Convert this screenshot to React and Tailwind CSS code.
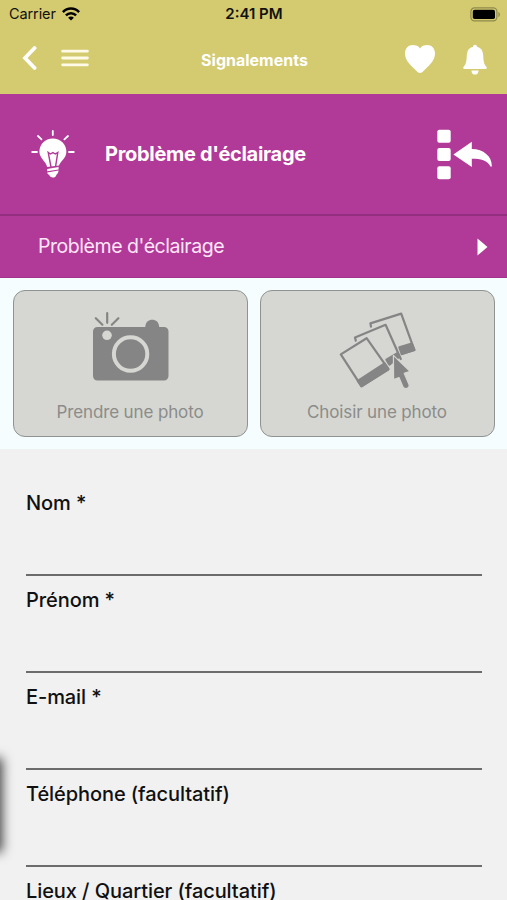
const fields = ["Nom *", "Prénom *", "E-mail *", "Téléphone (facultatif)", "Lieux / Quartier (facultatif)"]

const WifiIcon = () => (
  <svg width="18" height="14" viewBox="0 0 18 14" fill="none" stroke="#000" strokeWidth="2.5">
    <path d="M0.9 5.2 C5.3 0.4 12.7 0.4 17.1 5.2" />
    <path d="M3.9 8.4 C6.7 5.5 11.3 5.5 14.1 8.4" />
    <path d="M9 13.6 L6.1 10.7 C7.7 9.1 10.3 9.1 11.9 10.7 Z" fill="#000" stroke="none" />
  </svg>
)

const BatteryIcon = () => (
  <svg width="31" height="15" viewBox="0 0 31 15">
    <rect x="0.9" y="0.9" width="26" height="13" rx="3.6" fill="none" stroke="#8f8a4c" strokeWidth="1.2" />
    <rect x="2.8" y="2.8" width="22.2" height="9.2" rx="1.8" fill="#000" />
    <path d="M28.4 5 C30.4 5.6 30.4 9.4 28.4 10 Z" fill="#8f8a4c" />
  </svg>
)

const BackIcon = () => (
  <svg width="16" height="26" viewBox="0 0 16 26" fill="none" stroke="#fff" strokeWidth="3.8" strokeLinecap="round">
    <path d="M13.6 3 L4 13 L13.6 23" />
  </svg>
)

const MenuIcon = () => (
  <svg width="28" height="18" viewBox="0 0 28 18" stroke="#fffbe8" strokeWidth="2.8" strokeLinecap="round">
    <path d="M1.6 2.2 H26.4 M1.6 9 H26.4 M1.6 15.8 H26.4" />
  </svg>
)

const HeartIcon = () => (
  <svg width="32" height="30" viewBox="0 0 32 30" fill="#fff">
    <path d="M16 29 C14.2 29 12.8 27 11 25.4 C5.5 20.2 1 15.6 1 9.4 C1 4.4 4.4 1 8.7 1 C11.9 1 14.5 2 16 4.4 C17.5 2 20.1 1 23.3 1 C27.6 1 31 4.4 31 9.4 C31 15.6 26.5 20.2 21 25.4 C19.2 27 17.8 29 16 29 Z" />
  </svg>
)

const BellIcon = () => (
  <svg width="26" height="31" viewBox="0 0 26 31" fill="#fff">
    <path d="M13 0.8 C14.2 0.8 15 1.6 15 2.8 C19.2 3.8 21 7.2 21.2 11.4 C21.4 17.4 22.2 20.4 24.2 22.4 C25.2 23.4 25 25 23.4 25 H2.6 C1 25 0.8 23.4 1.8 22.4 C3.8 20.4 4.6 17.4 4.8 11.4 C5 7.2 6.8 3.8 11 2.8 C11 1.6 11.8 0.8 13 0.8 Z" />
    <path d="M9.4 26.4 H16.6 C16.6 32 9.4 32 9.4 26.4 Z" />
  </svg>
)

const BulbIcon = () => (
  <svg width="44" height="48" viewBox="0 0 44 48" fill="none">
    <path d="M21.8 1 V5 M7 6 L10.5 9.4 M37 6 L33.4 9.4 M1.2 22 H6 M38 22 H42.8" stroke="#fff" strokeWidth="1.8" strokeLinecap="round" />
    <path d="M21.8 8.6 C29.4 8.6 35.4 14.4 35.4 21.8 C35.4 28.4 28.8 31.6 27.8 36.4 L16.2 37.8 C16 31.8 8.4 28.8 8.4 21.8 C8.4 14.4 14.2 8.6 21.8 8.6 Z" fill="#fff" />
    <path d="M20 37 L17.2 22.4 L19.4 24 L21.9 22.6 L24.4 24 L26.8 22.4 L24.6 36.4" stroke="#b13997" strokeWidth="1.4" />
    <path d="M15.8 37 L28 35.4 V36.8 L15.8 38.4 Z" fill="#b13997" />
    <path d="M16.2 38.9 L27.6 37 V39.4 L16.2 41.2 Z M16.2 42.4 L27.6 40.6 C27.2 43.4 26.4 44 25.6 44.4 C25 47 23.4 47.4 21.8 47.4 C20 47.4 18.8 46.8 18.2 44.8 C17 44.4 16.4 43.6 16.2 42.4 Z" fill="#fff" />
  </svg>
)

const ReturnIcon = () => (
  <svg width="56" height="51" viewBox="0 0 56 51" fill="#fff">
    <rect x="0.3" y="0.8" width="13.4" height="13" rx="2" />
    <rect x="0.3" y="19" width="13.4" height="13" rx="2" />
    <rect x="0.3" y="37.2" width="13.4" height="13" rx="2" />
    <path d="M16.4 25.4 L34.8 12.8 V20 C46.6 20 54.8 27.6 54.8 36.4 C54.8 37.6 54 38.2 53.4 37.2 C50 31.4 44 29.8 34.8 29.8 V38 Z" />
  </svg>
)

const CameraIcon = () => (
  <svg width="76" height="70" viewBox="0 0 76 70">
    <path d="M2.8 6.2 L9.4 12.8 M14.2 1.2 V10.8 M25.4 6.2 L18.8 12.8" stroke="#858585" strokeWidth="2.2" strokeLinecap="round" />
    <path d="M4.5 15 H52.3 C52.3 5.2 66.2 5.2 66.2 15 H71 C73.6 15 75.5 16.9 75.5 19.5 V64 C75.5 66.6 73.6 68.6 71 68.6 H4.5 C1.9 68.6 0 66.6 0 64 V19.5 C0 16.9 1.9 15 4.5 15 Z" fill="#858585" />
    <circle cx="14" cy="23.3" r="4.8" fill="#d6d7d2" />
    <circle cx="37.6" cy="42" r="16.7" fill="none" stroke="#d6d7d2" strokeWidth="4" />
  </svg>
)

const PicturesIcon = () => (
  <svg width="78" height="78" viewBox="0 0 78 78" fill="none" stroke="#858585" strokeWidth="2.2" strokeLinejoin="round" strokeLinecap="round">
    <path d="M32 14.6 L31.4 11.4 L62.2 1.6 L75.4 38 L62.8 42" />
    <path d="M60.4 35.4 L72.8 31.6 L75.4 38 L62.8 42 Z" fill="#858585" />
    <path d="M16.8 28.6 L16 25.6 L46.6 12.8 L61.8 47" />
    <path d="M47.4 47.6 L58.4 41.2 L60 45 L50.4 52.6 Z" fill="#858585" />
    <path d="M27.6 26.2 L1.8 42.4 L22.4 74.2 L49.4 57.2 Z" fill="#d6d7d2" />
    <path d="M18.8 68.8 L45.6 51.4 L49.4 57.2 L22.4 74.2 Z" fill="#858585" />
    <path d="M54.4 43.4 L71 59.4 L65.2 61.2 L70 72.4 C71.2 76.6 65.4 78 63.8 74.6 L60 65.6 L54.6 67.6 Z" fill="#858585" stroke="#d6d7d2" strokeWidth="1.2" />
  </svg>
)

const PhotoButton = ({ icon, label }) => (
  <button className="flex h-[147px] w-[235px] flex-col items-center rounded-[12px] border-[1.5px] border-[#8f9391] bg-[#d6d7d2]">
    <div className="flex h-[109px] w-full justify-center pl-px pt-[21px]">{icon}</div>
    <span className="text-[17px] leading-6 tracking-[-0.13px] text-[#8b8c8a]">{label}</span>
  </button>
)

const Field = ({ label }) => (
  <div className="h-[97px] shrink-0 border-b-2 border-[#6c6c6c] pt-3">
    <label className="block whitespace-nowrap text-[20px] font-medium leading-6 tracking-[-0.08px] text-[#101010]">{label}</label>
  </div>
)

export default function App() {
  return (
    <div className="relative flex h-[900px] w-[507px] flex-col overflow-hidden bg-[#f1f1f1] font-['Inter',sans-serif]">
      <header className="h-[94px] shrink-0 bg-[#d4ca70]">
        <div className="grid h-7 grid-cols-3 items-center pl-[9px] pr-[8px] text-[#111]">
          <div className="flex items-center gap-[6px] text-[14.5px] tracking-[-0.1px]">
            Carrier
            <WifiIcon />
          </div>
          <div className="text-center text-[15px] font-semibold">2:41 PM</div>
          <div className="-mr-[2px] flex justify-end">
            <BatteryIcon />
          </div>
        </div>

        <div className="grid h-[62px] grid-cols-[1fr_auto_1fr] items-center pl-[21px] pr-[19px]">
          <div className="flex items-center gap-6 pb-[2px]">
            <BackIcon />
            <MenuIcon />
          </div>
          <h1 className="pt-px text-[16px] font-bold text-white">Signalements</h1>
          <div className="flex items-center justify-end gap-[26px]">
            <HeartIcon />
            <BellIcon />
          </div>
        </div>
      </header>

      <section className="flex h-[122px] shrink-0 items-center border-b-2 border-[#932f7e] bg-[#b13997] pl-[31px] pr-[14px]">
        <BulbIcon />
        <h2 className="ml-[30px] grow text-[20px] font-bold tracking-[-0.3px] text-white">Problème d'éclairage</h2>
        <ReturnIcon />
      </section>

      <section className="flex h-[62px] shrink-0 items-center justify-between border-b border-[#a0358a] bg-[#b13997] pl-[38px] pr-[19px] text-[19.5px] tracking-[-0.45px] text-[#ffe6fa]">
        Problème d'éclairage
        <svg width="11" height="18" viewBox="0 0 11 18" fill="#fff">
          <path d="M0.5 0.5 V17.5 L10.5 9 Z" />
        </svg>
      </section>

      <section className="flex h-[171px] shrink-0 justify-center gap-3 bg-[#f5fdff] pt-3">
        <PhotoButton icon={<CameraIcon />} label="Prendre une photo" />
        <PhotoButton icon={<PicturesIcon />} label="Choisir une photo" />
      </section>

      <form className="flex flex-col pl-[26px] pr-[25px] pt-[30px]">
        {fields.map((label) => (
          <Field key={label} label={label} />
        ))}
      </form>

      {/* shadow of the closed side drawer */}
      <div className="absolute -left-4 top-[760px] h-[90px] w-4 shadow-[0_0_12px_2px_rgba(0,0,0,0.75)]" />
    </div>
  )
}
